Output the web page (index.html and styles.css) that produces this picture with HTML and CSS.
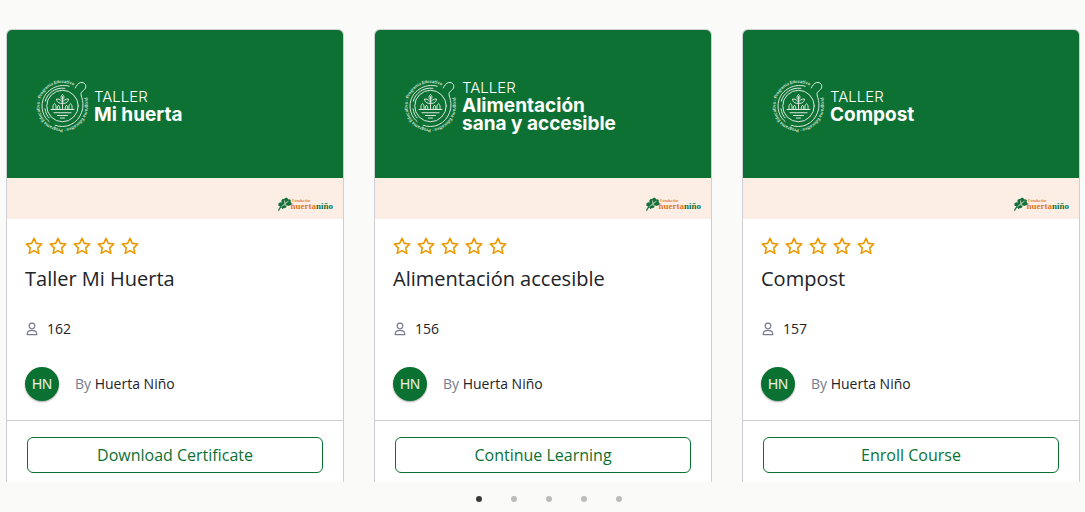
FILE: index.html
```html
<!DOCTYPE html>
<html lang="es">
<head>
	<meta charset="UTF-8">
	<meta name="viewport" content="width=device-width, initial-scale=1">
	<title>Talleres</title>
	<link rel="stylesheet" href="styles.css">
</head>
<body>
	<svg class="defs" width="0" height="0" aria-hidden="true">
		<symbol id="star" viewBox="0 0 18 18">
			<path fill="none" stroke="#ed9700" stroke-width="1.6" stroke-linejoin="round" d="M9 1.4L11.3 6.4L16.8 7L12.7 10.8L13.8 16.4L9 13.6L4.2 16.4L5.3 10.8L1.2 7L6.7 6.4Z"/>
		</symbol>
		<symbol id="person" viewBox="0 0 12 14">
			<path fill="none" stroke="#757c8e" stroke-width="1.2" stroke-linejoin="round" d="M6 1.2A2.8 2.8 0 1 1 6 6.8A2.8 2.8 0 1 1 6 1.2ZM1.3 12.6C1.3 9.9 2.8 8.6 4.4 8.6H7.6C9.2 8.6 10.7 9.9 10.7 12.6Z"/>
		</symbol>
	</svg>

	<main class="courses">
		<article class="card">
			<div class="banner">
				<svg class="seal" viewBox="0 0 216 232">
					<g id="seal">
						<path id="seal-ring" d="M192 84A92 92 0 1 1 146 33" fill="none"/>
						<text class="seal-text"><textPath href="#seal-ring">Programa Educativo · Programa Educativo · Programa Educativo</textPath></text>
						<g fill="none" stroke="#fff" stroke-width="4" stroke-linecap="round" opacity=".85">
							<circle cx="106" cy="116" r="63"/>
							<path d="M157 44C163 34 168 24 179 22C193 20 203 32 198 44C194 53 183 57 180 65C178 72 187 88 188 107C190 154 154 198 106 198C95 198 85 196 77 193"/>
							<path d="M133 37C84 22 24 58 24 116C24 144 37 165 52 178"/>
							<path d="M116 45C75 40 45 66 37 97M36 127C38 143 45 157 53 164"/>
							<path d="M60 130h92M72 143h68M86 154h40M98 164h16M106 130V78"/>
							<path d="M106 92C98 86 98 77 106 70C114 77 114 86 106 92M105 106C91 107 82 98 82 88C96 87 105 95 106 106C107 95 116 87 130 88C130 98 121 107 107 106"/>
							<path d="M68 127C66 117 69 110 74 106C79 110 82 117 80 127M132 127C130 117 133 110 138 106C143 110 146 117 144 127M85 128C84 121 86 117 90 113C94 117 96 121 95 128M117 128C116 121 118 117 122 113C126 117 128 121 127 128"/>
						</g>
					</g>
				</svg>
				<div class="banner-text"><span>TALLER</span><strong>Mi huerta</strong></div>
			</div>
			<div class="strip">
				<svg class="brand" viewBox="0 0 116 32">
					<g id="brand">
						<path fill="#17713c" d="M2 29C3 25 5 23 7 21C3 21 1 17 4 14C6 11 9 13 10 14C7 9 10 5 14 6C17 2 22 3 22 7C26 5 30 9 27 12C31 14 29 19 25 19C22 21 20 19 19 17C20 22 17 26 13 24C12 27 9 26 9 23C7 24 5 27 4 30Z"/>
						<path fill="none" stroke="#fdeee5" stroke-width="1.5" d="M9 21L23 10M15 9l1 6M17 20l-1-5"/>
						<text class="brand-top" x="30" y="11">Fundación</text>
						<text class="brand-name" x="27" y="26">huerta<tspan fill="#17713c">niño</tspan></text>
					</g>
				</svg>
			</div>
			<div class="body">
				<div class="stars" role="img" aria-label="0 de 5">
					<svg><use href="#star"/></svg><svg><use href="#star"/></svg><svg><use href="#star"/></svg><svg><use href="#star"/></svg><svg><use href="#star"/></svg>
				</div>
				<h3><a href="#">Taller Mi Huerta</a></h3>
				<div class="meta"><svg><use href="#person"/></svg><span>162</span></div>
				<div class="author"><span class="avatar">HN</span><span>By <a href="#">Huerta Niño</a></span></div>
			</div>
			<div class="footer"><button type="button">Download Certificate</button></div>
		</article>

		<article class="card">
			<div class="banner">
				<svg class="seal" viewBox="0 0 216 232"><use href="#seal"/></svg>
				<div class="banner-text"><span>TALLER</span><strong>Alimentación<br>sana y accesible</strong></div>
			</div>
			<div class="strip"><svg class="brand" viewBox="0 0 116 32"><use href="#brand"/></svg></div>
			<div class="body">
				<div class="stars" role="img" aria-label="0 de 5">
					<svg><use href="#star"/></svg><svg><use href="#star"/></svg><svg><use href="#star"/></svg><svg><use href="#star"/></svg><svg><use href="#star"/></svg>
				</div>
				<h3><a href="#">Alimentación accesible</a></h3>
				<div class="meta"><svg><use href="#person"/></svg><span>156</span></div>
				<div class="author"><span class="avatar">HN</span><span>By <a href="#">Huerta Niño</a></span></div>
			</div>
			<div class="footer"><button type="button">Continue Learning</button></div>
		</article>

		<article class="card">
			<div class="banner">
				<svg class="seal" viewBox="0 0 216 232"><use href="#seal"/></svg>
				<div class="banner-text"><span>TALLER</span><strong>Compost</strong></div>
			</div>
			<div class="strip"><svg class="brand" viewBox="0 0 116 32"><use href="#brand"/></svg></div>
			<div class="body">
				<div class="stars" role="img" aria-label="0 de 5">
					<svg><use href="#star"/></svg><svg><use href="#star"/></svg><svg><use href="#star"/></svg><svg><use href="#star"/></svg><svg><use href="#star"/></svg>
				</div>
				<h3><a href="#">Compost</a></h3>
				<div class="meta"><svg><use href="#person"/></svg><span>157</span></div>
				<div class="author"><span class="avatar">HN</span><span>By <a href="#">Huerta Niño</a></span></div>
			</div>
			<div class="footer"><button type="button">Enroll Course</button></div>
		</article>
	</main>

	<nav class="dots">
		<button type="button" class="active" aria-label="1"></button>
		<button type="button" aria-label="2"></button>
		<button type="button" aria-label="3"></button>
		<button type="button" aria-label="4"></button>
		<button type="button" aria-label="5"></button>
	</nav>
</body>
</html>
```
FILE: styles.css
```css
*{box-sizing: border-box;}
body{margin: 0;background: #fafaf9;font-family: "Open Sans","Noto Sans",sans-serif;font-size: 14px;line-height: 20px;color: #212327;}
a{color: inherit;text-decoration: none;}
svg{display: block;flex: none;}
.defs{position: absolute;}

.courses{display: grid;grid-template-columns: repeat(3,1fr);gap: 30px;padding: 29px 5px 0 6px;}
.card{background: #fff;border: 1px solid #cdcfd5;border-bottom: 0;border-radius: 6px 6px 0 0;overflow: hidden;}

.banner{display: flex;align-items: center;gap: 4px;height: 148px;padding: 4px 29px 0;background: #0d7134;color: #fff;}
.seal{width: 54px;height: 58px;overflow: visible;}
.seal-text{font-family: Lato,sans-serif;font-size: 18px;font-weight: 700;fill: #d5e8db;}
.banner-text{font-family: Inter,"Open Sans",sans-serif;}
.banner-text span{display: block;font-size: 15px;line-height: 18px;font-weight: 300;}
.banner-text strong{display: block;font-size: 19px;line-height: 18px;font-weight: 700;}
.strip{display: flex;justify-content: flex-end;height: 41px;padding: 18px 8px 0;background: #fdeee5;}
.brand{width: 58px;height: 16px;}
.brand-top{font-family: "Liberation Serif",serif;font-size: 8px;font-weight: 700;fill: #e28b45;}
.brand-name{font-family: "Liberation Serif",serif;font-size: 18px;font-weight: 700;fill: #df7a2b;}

.body{padding: 18px 18px 19px;}
.stars{display: flex;gap: 6px;}
.stars svg{width: 18px;height: 18px;}
.body h3{margin: 10px 0 26px;font-size: 20px;line-height: 28px;font-weight: 400;}
.meta{display: flex;align-items: center;gap: 8px;}
.meta svg{width: 14px;height: 14px;}
.author{display: flex;align-items: center;gap: 16px;margin-top: 28px;color: #757c8e;}
.author a{color: #212327;}
.avatar{width: 34px;height: 34px;line-height: 34px;border-radius: 50%;background: #0a7133;color: #e9f3e4;text-align: center;font-family: "Liberation Sans",Arial,sans-serif;box-shadow: 0 1px 2px rgba(0,0,0,.35);}

.footer{padding: 16px 20px 9px;border-top: 1px solid #cdcfd5;}
.footer button{display: block;width: 100%;height: 36px;padding: 0;border: 1px solid #0a7133;border-radius: 6px;background: #fff;color: #0a7133;font-family: inherit;font-size: 16px;cursor: pointer;}

.dots{display: flex;justify-content: center;gap: 29px;padding: 14px 0 13px 13px;}
.dots button{width: 6px;height: 6px;padding: 0;border: 0;border-radius: 50%;background: #bcbcbb;cursor: pointer;}
.dots .active{background: #3a3a3a;}
```
